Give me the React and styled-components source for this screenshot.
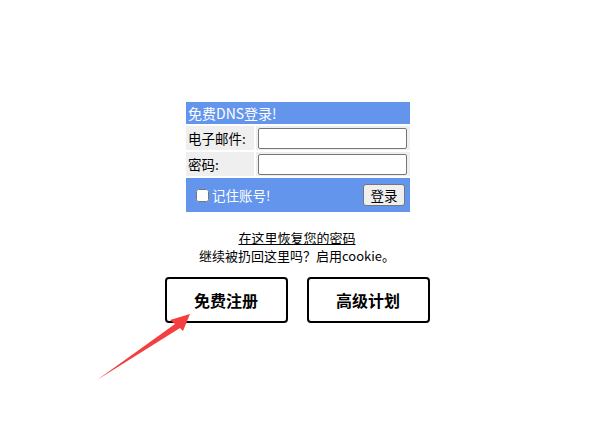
import styled, { createGlobalStyle } from 'styled-components';

const GlobalStyle = createGlobalStyle`
  html, body {
    margin: 0;
    padding: 0;
    background: #fff;
    font-family: "Noto Sans CJK SC", "Liberation Sans", sans-serif;
    color: #000;
  }
`;

const Page = styled.div`
  position: relative;
  width: 594px;
  height: 431px;
  display: flex;
  flex-direction: column;
  align-items: center;
  padding-top: 100px;
  box-sizing: border-box;
`;

const LoginTable = styled.table`
  width: 228px;
  border-spacing: 2px;
  font-size: 13.5px;
  margin-left: 2px;
`;

const HeadCell = styled.td`
  background: #6495ed;
  color: #fff;
  height: 22px;
  padding: 0 2px;
  line-height: 22px;
  font-size: 14px;
`;

const LabelCell = styled.td`
  background: #efefef;
  width: 64px;
  padding: 0 2px;
  height: 24px;
`;

const FieldCell = styled.td`
  background: #efefef;
  padding: 1px 2px 1px 2px;
`;

const Field = styled.input`
  box-sizing: border-box;
  width: 149px;
  height: 21px;
  border: 1px solid #767676;
  border-radius: 2px;
  display: block;
  margin: 0;
`;

const FootCell = styled.td`
  background: #6495ed;
  height: 34px;
  padding: 0 5px 0 9px;
`;

const FootRow = styled.div`
  display: flex;
  align-items: center;
  justify-content: space-between;
`;

const Remember = styled.label`
  display: flex;
  align-items: center;
  color: #fff;
  font-size: 13.5px;
`;

const Check = styled.input`
  width: 13px;
  height: 13px;
  margin: 0 3px 0 1px;
`;

const SubmitButton = styled.button`
  height: 22px;
  width: 42px;
  padding: 0;
  font-family: inherit;
  font-size: 13.5px;
  background: #efefef;
  border: 1px solid #767676;
  border-radius: 3px;
`;

const Links = styled.div`
  margin-top: 15px;
  text-align: center;
  font-size: 13px;
  line-height: 18px;
`;

const Recover = styled.a`
  display: block;
  color: #000;
  text-decoration: underline;
`;

const Actions = styled.div`
  display: flex;
  gap: 19px;
  margin-top: 12px;
`;

const BigButton = styled.button`
  width: 123px;
  height: 46px;
  box-sizing: border-box;
  background: #fff;
  border: 2px solid #000;
  border-radius: 4px;
  font-family: inherit;
  font-size: 16px;
  font-weight: 700;
  color: #000;
`;

const Arrow = styled.svg`
  position: absolute;
  left: 0;
  top: 0;
  pointer-events: none;
`;

export default function App() {
  return (
    <Page>
      <GlobalStyle />
      <LoginTable>
        <tbody>
          <tr>
            <HeadCell colSpan={2}>免费DNS登录!</HeadCell>
          </tr>
          <tr>
            <LabelCell>电子邮件:</LabelCell>
            <FieldCell><Field type="text" /></FieldCell>
          </tr>
          <tr>
            <LabelCell>密码:</LabelCell>
            <FieldCell><Field type="password" /></FieldCell>
          </tr>
          <tr>
            <FootCell colSpan={2}>
              <FootRow>
                <Remember><Check type="checkbox" />记住账号!</Remember>
                <SubmitButton>登录</SubmitButton>
              </FootRow>
            </FootCell>
          </tr>
        </tbody>
      </LoginTable>
      <Links>
        <Recover href="#">在这里恢复您的密码</Recover>
        <div>继续被扔回这里吗？启用cookie。</div>
      </Links>
      <Actions>
        <BigButton>免费注册</BigButton>
        <BigButton>高级计划</BigButton>
      </Actions>
      <Arrow width="594" height="431" viewBox="0 0 594 431">
        <polygon
          points="190,314 170,320 175,324 97,380 180,328 183,331"
          fill="#f33f3f"
        />
      </Arrow>
    </Page>
  );
}
